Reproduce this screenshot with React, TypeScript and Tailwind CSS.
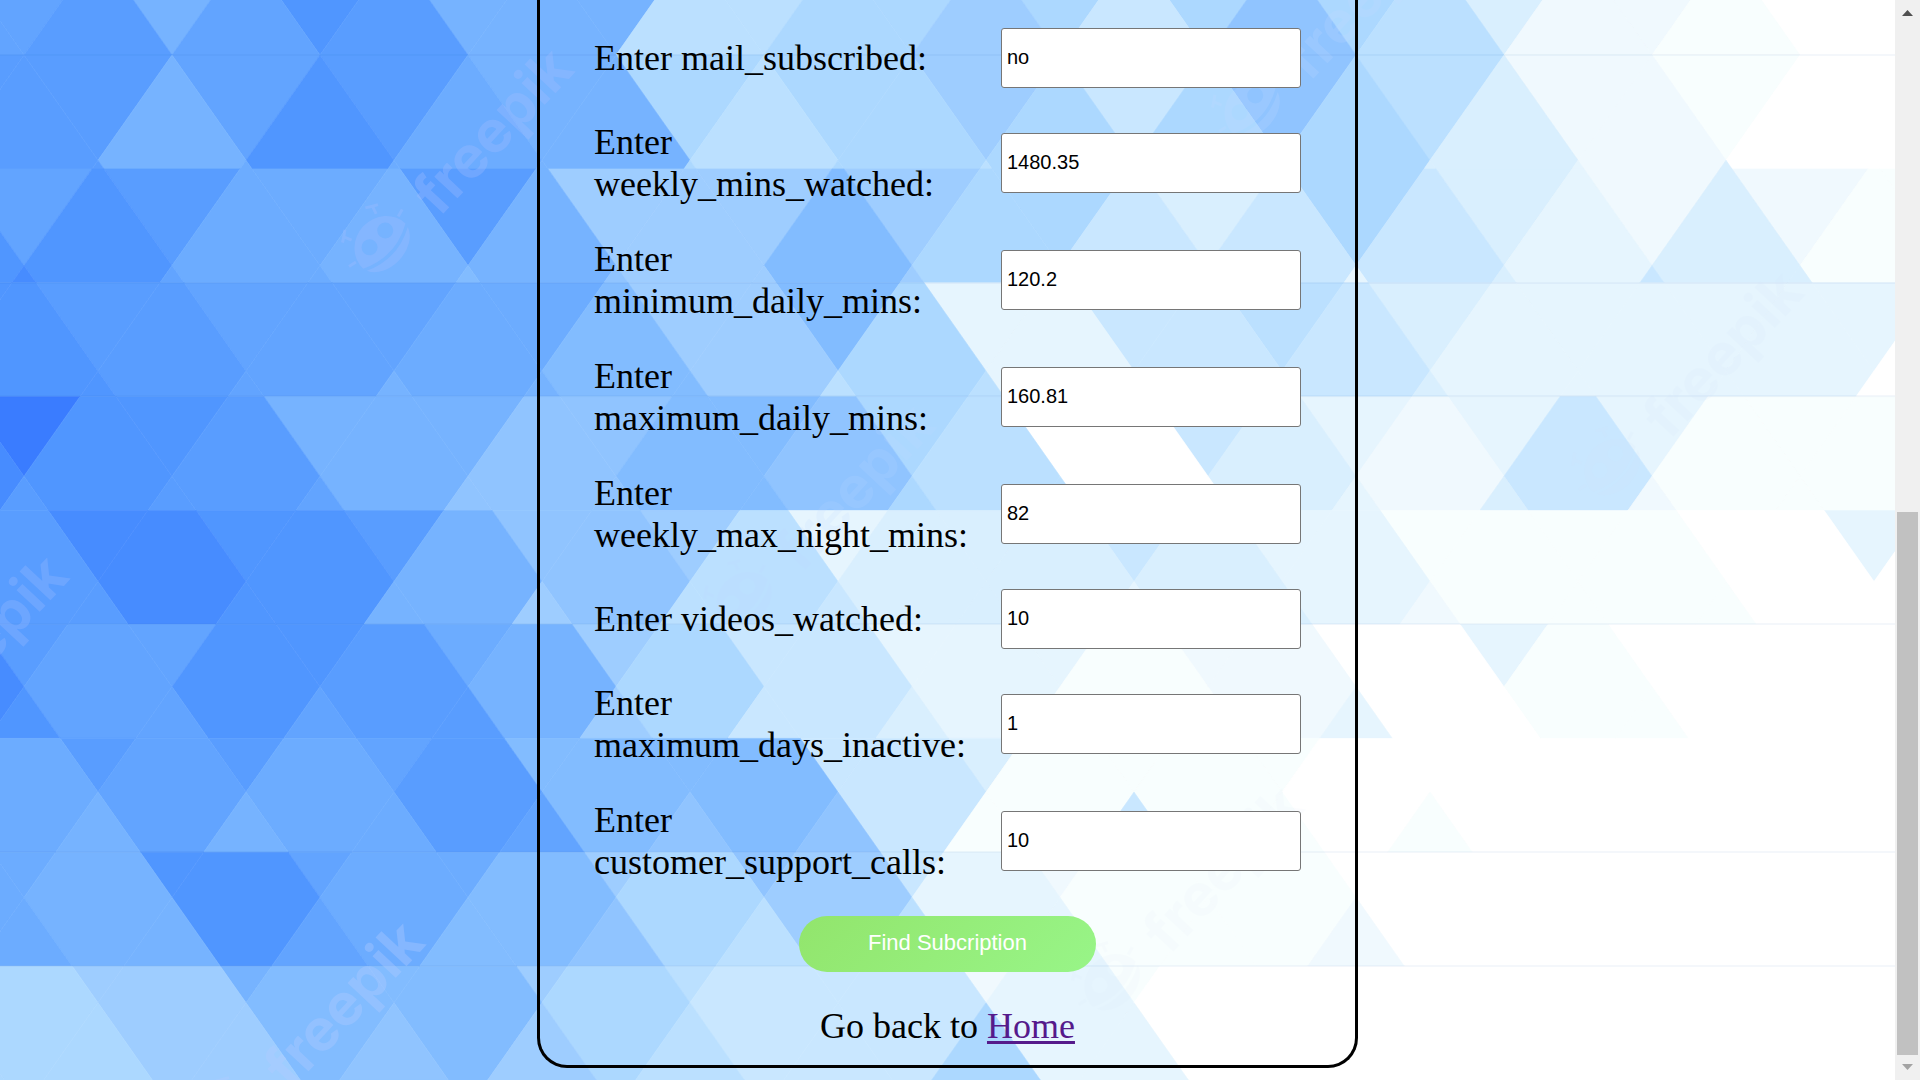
import React from "react";

const TINTS: Record<string, string> = {
  a: "#3a7cff",
  b: "#478cff",
  c: "#5096ff",
  d: "#599dff",
  e: "#62a4ff",
  f: "#6cacff",
  g: "#76b3ff",
  h: "#82bcff",
  i: "#90c4ff",
  j: "#9ecdff",
  k: "#acd8ff",
  l: "#bbe0ff",
  m: "#c9e7ff",
  n: "#d9effe",
  o: "#e6f5fe",
  p: "#f0f9fe",
  q: "#f8fefe",
  w: "#ffffff",
};

// Each strip of the mosaic crosses three bands of diamonds; one letter per diamond.
const STRIPS: [string, string, string][] = [
  ["egcgglkkkknpww", "ededglkjmilpqw", "ededglkjmilpqw"],
  ["ddedgkkjmilpqw", "dgcfglkkkknpww", "edffgkklmknonw"],
  ["edfdjjjknknppq", "ccfggjhkmmmonq", "befhijjmmonmno"],
  ["cdeefjhomlnooo", "cdefhjkommooow", "ccegghllpmnoow"],
  ["acggihkwmoooqq", "bcdgihilwnpmqq", "ddeiihklwonpqq"],
  ["cbcdijonmoqqwo", "dbcgilnnnoqqww", "cdcgjlmnonpqqw"],
  ["decfjmoopwowww", "becdgkmoqpwqww", "ceedjmnqqowqww"],
  ["gddehhmnqqwwww", "fefdhhmqqwwwww", "fggfeiiqmqqwww"],
  ["fcefjimpqwwwww", "fgcfhkjoqqwwww", "fgehilloqpwwww"],
  ["kjghjlmpqwwwww", "kjhhkmmowwwwww", "kkjijlmkowwwww"],
];

const ORIGIN_Y = 55;
const STRIP_H = 113.9;
const HALF_W = 74;
const HALF_H = 105.3;

function clippedDiamond(cx: number, cy: number, top: number, bottom: number) {
  const t = Math.max(top, cy - HALF_H);
  const b = Math.min(bottom, cy + HALF_H);
  if (b <= t) return "";
  const half = (y: number) => HALF_W * (1 - Math.abs(y - cy) / HALF_H);
  const ys = cy > t && cy < b ? [t, cy, b] : [t, b];
  const right = ys.map((y) => `${(cx + half(y)).toFixed(1)},${y.toFixed(1)}`);
  const left = [...ys].reverse().map((y) => `${(cx - half(y)).toFixed(1)},${y.toFixed(1)}`);
  return [...right, ...left].join(" ");
}

const CELLS = STRIPS.flatMap((bands, r) => {
  const top = ORIGIN_Y + (r - 1) * STRIP_H;
  return bands.flatMap((letters, n) => {
    const k = r - 1 + n;
    const startX = Math.abs(k) % 2 === 1 ? 24 : -50;
    return letters.split("").map((letter, i) => ({
      key: `${r}-${n}-${i}`,
      points: clippedDiamond(startX + i * 148, ORIGIN_Y + k * HALF_H, top, top + STRIP_H),
      fill: TINTS[letter],
    }));
  });
}).filter((cell) => cell.points !== "");

const WATERMARKS = [
  { x: 380, y: 242, color: "#a3bdff", opacity: 0.32 },
  { x: -125, y: 749, color: "#a3bdff", opacity: 0.28 },
  { x: 231, y: 1115, color: "#b5ccff", opacity: 0.34 },
  { x: 1250, y: 107, color: "#c9dcff", opacity: 0.18 },
  { x: 742, y: 598, color: "#c0d8ff", opacity: 0.16 },
  { x: 1610, y: 465, color: "#d4e4fb", opacity: 0.13 },
  { x: 1110, y: 980, color: "#d4e4fb", opacity: 0.08 },
];

type Mark = (typeof WATERMARKS)[number];

function Watermark({ x, y, color, opacity }: Mark) {
  return (
    <g
      transform={`translate(${x} ${y}) rotate(-47)`}
      fill={color}
      stroke={color}
      opacity={opacity}
    >
      <path
        fillRule="evenodd"
        stroke="none"
        d="M-31 6a31 29 0 0 1 62 0q-31 16-62 0zM-19-4a8 8 0 1 0 16 0a8 8 0 1 0-16 0M4-4a8 8 0 1 0 16 0a8 8 0 1 0-16 0"
      />
      <path stroke="none" d="M-30 10q30 15 60 0a31 22 0 0 1-60 0z" />
      <path
        fill="none"
        strokeWidth="3"
        d="M-18-22l-3-8M-26-27l5-3 6-4M18-22l3-8M26-27l-5-3-6-4M-31-4l-8-2M31-4l8-2"
      />
      <text
        x="58"
        y="27"
        stroke="none"
        fontFamily="Inter, sans-serif"
        fontWeight="700"
        fontSize="58"
      >
        freepik
      </text>
    </g>
  );
}

function Mosaic() {
  return (
    <svg
      aria-hidden="true"
      className="absolute inset-0 -z-10 h-full w-full"
      viewBox="0 0 1895 1080"
      preserveAspectRatio="none"
    >
      {CELLS.map((cell) => (
        <polygon
          key={cell.key}
          points={cell.points}
          fill={cell.fill}
          stroke={cell.fill}
          strokeWidth="0.6"
        />
      ))}
      {[55, 283, 396, 624, 852, 966].map((y) => (
        <rect key={y} x="0" y={y - 1} width="1895" height="2" fill="#2f5fb0" opacity="0.05" />
      ))}
      {WATERMARKS.map((mark) => (
        <Watermark key={`${mark.x}-${mark.y}`} {...mark} />
      ))}
    </svg>
  );
}

const FIELDS = [
  { name: "mail_subscribed", value: "no" },
  { name: "weekly_mins_watched", value: "1480.35" },
  { name: "minimum_daily_mins", value: "120.2" },
  { name: "maximum_daily_mins", value: "160.81" },
  { name: "weekly_max_night_mins", value: "82" },
  { name: "videos_watched", value: "10" },
  { name: "maximum_days_inactive", value: "1" },
  { name: "customer_support_calls", value: "10" },
];

function Field({ name, value }: { name: string; value: string }) {
  return (
    <div className="grid grid-cols-[1fr_300px] items-center gap-x-5">
      <label htmlFor={name}>Enter {name}:</label>
      <input
        id={name}
        name={name}
        type="text"
        defaultValue={value}
        className="h-[60px] w-full rounded-[3px] border border-[#767676] bg-white px-[5px] pb-0.5 font-['Liberation_Sans',Arial,sans-serif] text-[20px] text-black"
      />
    </div>
  );
}

function ScrollBar() {
  return (
    <div aria-hidden="true" className="flex w-[25px] shrink-0 flex-col items-center bg-[#f0f0f0]">
      <svg className="h-[25px] w-[25px]" viewBox="0 0 25 25" fill="#505050">
        <path d="M7 16h11l-5.500-6z" />
      </svg>
      <div className="grow-[487]" />
      <div className="w-[21px] grow-[543] bg-[#c1c1c1]" />
      <svg className="h-[25px] w-[25px]" viewBox="0 0 25 25" fill="#a3a3a3">
        <path d="M7 9h11l-5.500 6z" />
      </svg>
    </div>
  );
}

export default function App() {
  return (
    <div className="flex min-h-screen">
      <main className="relative isolate flex min-w-0 grow justify-center overflow-hidden pb-3 font-['Liberation_Serif','Times_New_Roman',serif] text-[36px] leading-[42px] text-black">
        <Mosaic />
        <form
          className="flex w-full max-w-[821px] flex-col rounded-b-[30px] border-x-[3px] border-b-[3px] border-black px-[54px] pt-7 pb-[18px]"
          onSubmit={(event) => event.preventDefault()}
        >
          <div className="flex flex-col gap-[33px]">
            {FIELDS.map((field) => (
              <Field key={field.name} {...field} />
            ))}
            <button
              type="submit"
              className="h-14 w-[297px] self-center rounded-full bg-linear-[135deg] from-[#92e56c] to-[#98f588] pb-0.5 font-['Liberation_Sans',Arial,sans-serif] text-[22px] text-white"
            >
              Find Subcription
            </button>
            <p className="text-center">
              Go back to{" "}
              <a
                href="#home"
                className="text-[#551a8b] underline decoration-[3px] underline-offset-[3px]"
              >
                Home
              </a>
            </p>
          </div>
        </form>
      </main>
      <ScrollBar />
    </div>
  );
}
